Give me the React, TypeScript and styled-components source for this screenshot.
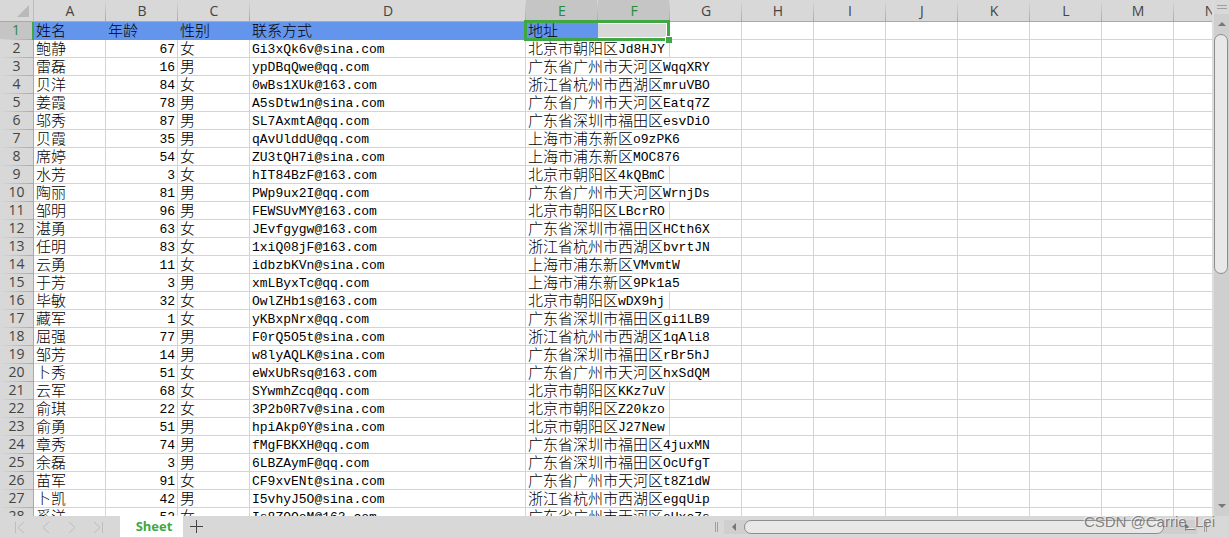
import React from "react";
import styled, { createGlobalStyle, css } from "styled-components";

const UI_FONT = '"Open Sans", "Noto Sans", sans-serif';
const CJK_FONT = '"Noto Sans CJK SC", sans-serif';
const MONO_FONT = '"Liberation Mono", "Noto Sans CJK SC", monospace';

const color = {
  chrome: "#d8d8d8",
  chromeActive: "#c5c5c5",
  edge: "#a9a9a9",
  grid: "#d4d4d4",
  green: "#3fa845",
  greenText: "#2a8a3c",
  blue: "#6495ed",
  label: "#444444",
};

const GlobalStyle = createGlobalStyle`
  * { box-sizing: border-box; }
  body { margin: 0; background: #ffffff; }
  button { border: 0; padding: 0; margin: 0; background: none; font: inherit; }
`;

const Workbook = styled.div`
  position: relative;
  display: flex;
  flex-direction: column;
  height: 100vh;
  overflow: hidden;
  font-family: ${UI_FONT};
`;

const Body = styled.div`
  display: flex;
  flex: 1;
  min-height: 0;
`;

const Viewport = styled.main`
  flex: 1;
  min-width: 0;
  overflow: hidden;
  background: #ffffff;
`;

const Grid = styled.table`
  width: max-content;
  table-layout: fixed;
  border-collapse: separate;
  border-spacing: 0;
`;

const Col = styled.col<{ $w: number }>`
  width: ${(p) => p.$w}px;
`;

const ColumnHead = styled.th<{ $active?: boolean }>`
  height: 22px;
  padding: 0;
  font-size: 14px;
  font-weight: 400;
  line-height: 21px;
  color: ${(p) => (p.$active ? color.greenText : color.label)};
  background: linear-gradient(to bottom, ${color.chrome}, ${color.edge}) right / 1px 100% no-repeat,
    ${(p) => (p.$active ? color.chromeActive : color.chrome)};
  border-bottom: 1px solid ${color.edge};
`;

const Corner = styled.td`
  height: 22px;
  padding: 0 4px 4px 0;
  line-height: 0;
  text-align: right;
  vertical-align: bottom;
  background: ${color.chrome};
  border-right: 1px solid #bcbcbc;
  border-bottom: 1px solid ${color.edge};
`;

const RowHead = styled.th<{ $active?: boolean }>`
  height: 18px;
  padding: 0 0 2px;
  font-size: 14px;
  font-weight: 400;
  line-height: 16px;
  color: ${(p) => (p.$active ? color.greenText : color.label)};
  background: linear-gradient(to right, ${color.chrome}, ${color.edge}) bottom / 100% 1px no-repeat,
    ${(p) => (p.$active ? color.chromeActive : color.chrome)};
  border-right: ${(p) => (p.$active ? `2px solid ${color.green}` : `1px solid ${color.edge}`)};
`;

const Cell = styled.td<{ $fill?: string; $number?: boolean }>`
  position: relative;
  height: 18px;
  padding: 0 2px;
  line-height: 17px;
  white-space: nowrap;
  color: #000000;
  text-align: ${(p) => (p.$number ? "right" : "left")};
  border-right: 1px solid ${color.grid};
  border-bottom: 1px solid ${color.grid};
  ${(p) =>
    p.$fill &&
    css`
      background: ${p.$fill};
      border-color: ${p.$fill};
    `}
`;

const SelectedCell = styled(Cell)`
  box-shadow: inset 0 2px 0 #ffffff, inset 0 -2px 0 #ffffff, inset -3px 0 0 #ffffff;
`;

const Line = styled.div`
  display: flex;
  height: 17px;
  align-items: flex-start;
`;

const NumberLine = styled(Line)`
  justify-content: flex-end;
`;

const Han = styled.span`
  font-family: ${CJK_FONT};
  font-size: 15px;
  font-weight: 300;
  line-height: 15px;
`;

const Latin = styled.span`
  font-family: ${MONO_FONT};
  font-size: 13px;
  line-height: 20px;
`;

const Selection = styled.div`
  position: absolute;
  z-index: 2;
  top: -2px;
  left: -2px;
  width: calc(200% + 4px);
  height: 21px;
  border: 3px solid ${color.green};
  pointer-events: none;

  &::after {
    content: "";
    position: absolute;
    right: -5px;
    bottom: -5px;
    width: 6px;
    height: 6px;
    background: ${color.green};
    border-top: 1px solid #ffffff;
    border-left: 1px solid #ffffff;
  }
`;

const Rail = styled.aside`
  display: flex;
  flex-direction: column;
  width: 17px;
  border-left: 2px solid #dcdcdc;
  background: #cfcfcf;
`;

const RailSplit = styled.div`
  display: flex;
  flex-direction: column;
  align-items: center;
  justify-content: center;
  gap: 2px;
  height: 14px;
  background: ${color.chrome};
`;

const SplitLine = styled.span<{ $vertical?: boolean }>`
  width: ${(p) => (p.$vertical ? 1 : 10)}px;
  height: ${(p) => (p.$vertical ? 10 : 1)}px;
  background: #a0a0a0;
`;

const ArrowButton = styled.button<{ $w: number; $h: number }>`
  display: flex;
  flex: none;
  align-items: center;
  justify-content: center;
  width: ${(p) => p.$w}px;
  height: ${(p) => p.$h}px;
`;

const RailTrack = styled.div`
  display: flex;
  flex: 1;
  flex-direction: column;
  min-height: 0;
`;

const Thumb = styled.div<{ $vertical?: boolean }>`
  border: 1px solid #8e8e8e;
  border-radius: 7px;
  background: #e8e8e8;
  ${(p) => (p.$vertical ? "width: 14px; height: 52%;" : "width: 97%; height: 14px;")}
`;

const Footer = styled.footer`
  display: flex;
  flex: none;
  height: 22px;
  background: ${color.chrome};
`;

const SheetNav = styled.nav`
  display: flex;
  align-items: center;
  gap: 6px;
  width: 120px;
  padding-left: 10px;
`;

const NavButton = styled.button`
  display: flex;
  align-items: center;
  justify-content: center;
  width: 20px;
  height: 20px;
`;

const SheetTab = styled.button`
  width: 63px;
  height: 21px;
  padding-left: 5px;
  font-size: 13px;
  font-weight: 700;
  line-height: 21px;
  color: ${color.green};
  background: #ffffff;
`;

const AddButton = styled.button`
  display: flex;
  align-items: center;
  justify-content: center;
  width: 26px;
  height: 21px;
`;

const Spacer = styled.div`
  flex: 1;
`;

const FooterSplit = styled.div`
  display: flex;
  align-items: center;
  gap: 1px;
  padding: 0 6px 0 0;
`;

const ScrollX = styled.div`
  display: flex;
  align-items: center;
  width: calc(39% - 6px);
  height: 14px;
  margin: 4px 7px 0 0;
  background: #cfcfcf;
`;

const ScrollXTrack = styled.div`
  flex: 1;
`;

const FooterEnd = styled(FooterSplit)`
  padding: 0 22px 0 0;
`;

const Watermark = styled.div`
  position: absolute;
  z-index: 3;
  right: 14px;
  bottom: 7px;
  font-family: "Liberation Sans", Arial, sans-serif;
  font-size: 15px;
  line-height: 18px;
  color: rgba(110, 110, 110, 0.85);
  text-shadow: -1px -1px 0 rgba(255, 255, 255, 0.6);
`;

const columns = "ABCDEFGHIJKLMNOPQRSTUVWXYZ".split("");

type Person = [string, number, string, string, string];

const people: Person[] = [
  ["鲍静", 67, "女", "Gi3xQk6v@sina.com", "北京市朝阳区Jd8HJY"],
  ["雷磊", 16, "男", "ypDBqQwe@qq.com", "广东省广州市天河区WqqXRY"],
  ["贝洋", 84, "女", "0wBs1XUk@163.com", "浙江省杭州市西湖区mruVBO"],
  ["姜霞", 78, "男", "A5sDtw1n@sina.com", "广东省广州市天河区Eatq7Z"],
  ["邬秀", 87, "男", "SL7AxmtA@qq.com", "广东省深圳市福田区esvDiO"],
  ["贝霞", 35, "男", "qAvUlddU@qq.com", "上海市浦东新区o9zPK6"],
  ["席婷", 54, "女", "ZU3tQH7i@sina.com", "上海市浦东新区MOC876"],
  ["水芳", 3, "女", "hIT84BzF@163.com", "北京市朝阳区4kQBmC"],
  ["陶丽", 81, "男", "PWp9ux2I@qq.com", "广东省广州市天河区WrnjDs"],
  ["邹明", 96, "男", "FEWSUvMY@163.com", "北京市朝阳区LBcrRO"],
  ["湛勇", 63, "女", "JEvfgygw@163.com", "广东省深圳市福田区HCth6X"],
  ["任明", 83, "女", "1xiQ08jF@163.com", "浙江省杭州市西湖区bvrtJN"],
  ["云勇", 11, "女", "idbzbKVn@sina.com", "上海市浦东新区VMvmtW"],
  ["于芳", 3, "男", "xmLByxTc@qq.com", "上海市浦东新区9Pk1a5"],
  ["毕敏", 32, "女", "OwlZHb1s@163.com", "北京市朝阳区wDX9hj"],
  ["藏军", 1, "女", "yKBxpNrx@qq.com", "广东省深圳市福田区gi1LB9"],
  ["屈强", 77, "男", "F0rQ5O5t@sina.com", "浙江省杭州市西湖区1qAli8"],
  ["邹芳", 14, "男", "w8lyAQLK@sina.com", "广东省深圳市福田区rBr5hJ"],
  ["卜秀", 51, "女", "eWxUbRsq@163.com", "广东省广州市天河区hxSdQM"],
  ["云军", 68, "女", "SYwmhZcq@qq.com", "北京市朝阳区KKz7uV"],
  ["俞琪", 22, "女", "3P2b0R7v@sina.com", "北京市朝阳区Z20kzo"],
  ["俞勇", 51, "男", "hpiAkp0Y@sina.com", "北京市朝阳区J27New"],
  ["章秀", 74, "男", "fMgFBKXH@qq.com", "广东省深圳市福田区4juxMN"],
  ["余磊", 3, "男", "6LBZAymF@qq.com", "广东省深圳市福田区OcUfgT"],
  ["苗军", 91, "女", "CF9xvENt@sina.com", "广东省广州市天河区t8Z1dW"],
  ["卜凯", 42, "男", "I5vhyJ5O@sina.com", "浙江省杭州市西湖区egqUip"],
  ["奚洋", 52, "女", "Is8ZQQoM@163.com", "广东省广州市天河区eUxo7s"],
];

// Splits a value into Chinese and Latin runs, each set in its own face.
function Value({ text }: { text: string }) {
  const runs = text.match(/[\u4e00-\u9fff]+|[^\u4e00-\u9fff]+/g) ?? [];
  return (
    <Line>
      {runs.map((run, i) =>
        /[\u4e00-\u9fff]/.test(run) ? <Han key={i}>{run}</Han> : <Latin key={i}>{run}</Latin>
      )}
    </Line>
  );
}

function PersonRow({ index, person }: { index: number; person: Person }) {
  const [name, age, sex, email, address] = person;
  // Long addresses run over the neighbouring empty cells.
  const span = address.startsWith("北京") ? 2 : 3;
  return (
    <tr>
      <RowHead scope="row">{index}</RowHead>
      <Cell><Value text={name} /></Cell>
      <Cell $number><NumberLine><Latin>{age}</Latin></NumberLine></Cell>
      <Cell><Value text={sex} /></Cell>
      <Cell><Value text={email} /></Cell>
      <Cell colSpan={span}><Value text={address} /></Cell>
      {columns.slice(4 + span).map((c) => <Cell key={c} />)}
    </tr>
  );
}

const arrows = {
  up: "M0 4 L4 0 L8 4 Z",
  down: "M0 0 L8 0 L4 4 Z",
  left: "M4 0 L4 8 L0 4 Z",
  right: "M0 0 L4 4 L0 8 Z",
};

function Arrow({ dir }: { dir: keyof typeof arrows }) {
  const flat = dir === "up" || dir === "down";
  return (
    <svg width={flat ? 8 : 4} height={flat ? 4 : 8} aria-hidden="true">
      <path d={arrows[dir]} fill="#777777" />
    </svg>
  );
}

const navIcons = [
  { label: "First sheet", d: "M1.5 1 V12 M10 1 L4 6.5 L10 12" },
  { label: "Previous sheet", d: "M9 1 L3 6.5 L9 12" },
  { label: "Next sheet", d: "M3 1 L9 6.5 L3 12" },
  { label: "Last sheet", d: "M2 1 L8 6.5 L2 12 M10.5 1 V12" },
];

export default function App() {
  return (
    <Workbook>
      <GlobalStyle />
      <Body>
        <Viewport>
          <Grid>
            <colgroup>
              <Col $w={34} />
              {columns.map((c) => <Col key={c} $w={c === "D" ? 276 : 72} />)}
            </colgroup>
            <thead>
              <tr>
                <Corner>
                  <svg width="12" height="12" aria-hidden="true">
                    <path d="M12 0 V12 H0 Z" fill="#b9b9b9" />
                  </svg>
                </Corner>
                {columns.map((c) => (
                  <ColumnHead key={c} scope="col" $active={c === "E" || c === "F"}>{c}</ColumnHead>
                ))}
              </tr>
            </thead>
            <tbody>
              <tr>
                <RowHead scope="row" $active>1</RowHead>
                {["姓名", "年龄", "性别", "联系方式"].map((t) => (
                  <Cell key={t} $fill={color.blue}><Value text={t} /></Cell>
                ))}
                <Cell $fill={color.blue}>
                  <Value text="地址" />
                  <Selection />
                </Cell>
                <SelectedCell $fill={color.chrome} />
                {columns.slice(6).map((c) => <Cell key={c} />)}
              </tr>
              {people.map((p, i) => <PersonRow key={i} index={i + 2} person={p} />)}
            </tbody>
          </Grid>
        </Viewport>
        <Rail>
          <RailSplit><SplitLine /><SplitLine /></RailSplit>
          <ArrowButton $w={15} $h={20} aria-label="Scroll up"><Arrow dir="up" /></ArrowButton>
          <RailTrack><Thumb $vertical /></RailTrack>
          <ArrowButton $w={15} $h={20} aria-label="Scroll down"><Arrow dir="down" /></ArrowButton>
        </Rail>
      </Body>
      <Footer>
        <SheetNav aria-label="Sheets">
          {navIcons.map((n) => (
            <NavButton key={n.label} aria-label={n.label}>
              <svg width="12" height="13" fill="none" stroke="#bdbdbd" aria-hidden="true">
                <path d={n.d} />
              </svg>
            </NavButton>
          ))}
        </SheetNav>
        <SheetTab>Sheet</SheetTab>
        <AddButton aria-label="Add sheet">
          <svg width="13" height="13" stroke="#444444" aria-hidden="true">
            <path d="M6.5 0 V13 M0 6.5 H13" />
          </svg>
        </AddButton>
        <Spacer />
        <FooterSplit><SplitLine $vertical /><SplitLine $vertical /></FooterSplit>
        <ScrollX>
          <ArrowButton $w={20} $h={14} aria-label="Scroll left"><Arrow dir="left" /></ArrowButton>
          <ScrollXTrack><Thumb /></ScrollXTrack>
          <ArrowButton $w={20} $h={14} aria-label="Scroll right"><Arrow dir="right" /></ArrowButton>
        </ScrollX>
        <FooterEnd><SplitLine $vertical /><SplitLine $vertical /></FooterEnd>
      </Footer>
      <Watermark>CSDN @Carrie_Lei</Watermark>
    </Workbook>
  );
}
